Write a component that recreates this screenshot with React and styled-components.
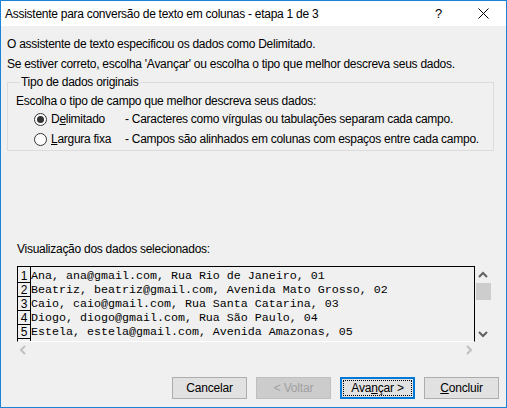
import React from "react";
import styled, { createGlobalStyle } from "styled-components";

const Global = createGlobalStyle`
  html, body { margin: 0; padding: 0; background: #f0f0f0; }
  * { box-sizing: border-box; }
`;

const UI = `"Liberation Sans", Arial, sans-serif`;

const Window = styled.div`
  width: 507px;
  height: 408px;
  border: 1px solid #1883d7;
  background: #f0f0f0;
  display: flex;
  flex-direction: column;
  font-family: ${UI};
  font-size: 12px;
  letter-spacing: -0.27px;
  color: #000;
  overflow: hidden;
  white-space: nowrap;
`;

const TitleBar = styled.div`
  height: 25px;
  background: #fff;
  display: flex;
  align-items: center;
  padding-left: 4px;
  flex-shrink: 0;
`;

const Title = styled.div`
  flex: 1;
  font-size: 12px;
  padding-top: 1px;
`;

const TitleButton = styled.div`
  width: 45px;
  height: 25px;
  display: flex;
  align-items: center;
  justify-content: center;
  font-size: 13px;
`;

const Body = styled.div`
  flex: 1;
  display: flex;
  flex-direction: column;
  padding: 8px 6px 0 6px;
`;

const Line = styled.div`
  height: 20px;
  line-height: 20px;
`;

const Group = styled.fieldset`
  margin: 1px 6px 0 0;
  padding: 6px 8px 1px 8px;
  border: 1px solid #dcdcdc;
  min-width: 0;
`;

const Legend = styled.legend`
  padding: 0 1px;
  margin-left: 4px;
  line-height: 14px;
`;

const GroupText = styled.div`
  height: 16px;
  line-height: 16px;
  margin-top: -2px;
`;

const RadioRow = styled.label`
  display: flex;
  align-items: center;
  height: 20px;
  padding-left: 18px;
`;

const RadioCircle = styled.span`
  width: 13px;
  height: 13px;
  border-radius: 50%;
  border: 1px solid #333;
  background: #fff;
  display: flex;
  align-items: center;
  justify-content: center;
  margin-right: 4px;
  flex-shrink: 0;
  &::after {
    content: "";
    width: 7px;
    height: 7px;
    border-radius: 50%;
    background: ${(p) => (p.$checked ? "#333" : "transparent")};
  }
`;

const RadioLabel = styled.span`
  width: 74px;
  flex-shrink: 0;
`;

const RadioDesc = styled.span``;

const U = styled.span`
  text-decoration: underline;
  text-underline-offset: 1px;
`;

const PreviewLabel = styled.div`
  margin: 90px 0 0 10px;
  height: 16px;
  line-height: 16px;
`;

const PreviewGrid = styled.div`
  margin: 9px 0 0 10px;
  display: grid;
  grid-template-columns: 458px 16px;
  grid-template-rows: 76px 16px;
  letter-spacing: 0;
`;

const PreviewBox = styled.div`
  border: 1px solid #000;
  border-bottom: 1px solid #fff;
  display: flex;
  overflow: hidden;
  padding-top: 2px;
`;

const NumCol = styled.div`
  width: 13px;
  border-right: 1px solid #000;
  display: flex;
  flex-direction: column;
  margin-top: -2px;
  padding-top: 2px;
`;

const NumCell = styled.div`
  height: 14px;
  border-bottom: 1px solid #000;
  font-size: 12px;
  line-height: 14px;
  text-align: center;
  flex-shrink: 0;
`;

const DataCol = styled.div`
  display: flex;
  flex-direction: column;
`;

const DataRow = styled.div`
  height: 14px;
  line-height: 14px;
  font-family: "Liberation Mono", "Courier New", monospace;
  font-size: 11.67px;
  white-space: pre;
`;

const VScroll = styled.div`
  display: flex;
  flex-direction: column;
  align-items: center;
  background: #f0f0f0;
`;

const ScrollArrow = styled.div`
  width: 16px;
  height: 17px;
  display: flex;
  align-items: center;
  justify-content: center;
`;

const Thumb = styled.div`
  width: 15px;
  height: 17px;
  background: #cdcdcd;
  margin-left: 1px;
`;

const Track = styled.div`
  flex: 1;
`;

const HScroll = styled.div`
  display: flex;
  justify-content: space-between;
  align-items: center;
  padding: 0 2px;
`;

const Footer = styled.div`
  margin-top: auto;
  display: flex;
  justify-content: flex-end;
  gap: 9px;
  padding: 0 1px 8px 0;
`;

const Button = styled.button`
  width: 75px;
  height: 22px;
  font-family: ${UI};
  font-size: 12px;
  letter-spacing: -0.2px;
  color: ${(p) => (p.disabled ? "#a0a0a0" : "#000")};
  background: ${(p) => (p.disabled ? "#cccccc" : "#e1e1e1")};
  border: ${(p) => (p.$default ? "2px solid #0078d7" : p.disabled ? "1px solid #bfbfbf" : "1px solid #adadad")};
  padding: 0;
  display: flex;
  align-items: center;
  justify-content: center;
  position: relative;
  &::after {
    content: "";
    display: ${(p) => (p.$default ? "block" : "none")};
    position: absolute;
    inset: 1px;
    border: 1px dotted #000;
  }
`;

const Chevron = ({ dir, color }) => {
  const paths = {
    up: "M1 6 L5 2 L9 6",
    down: "M1 2 L5 6 L9 2",
    left: "M6 1 L2 5 L6 9",
    right: "M2 1 L6 5 L2 9",
  };
  const vertical = dir === "up" || dir === "down";
  return (
    <svg width={vertical ? 10 : 8} height={vertical ? 8 : 10} viewBox={vertical ? "0 0 10 8" : "0 0 8 10"}>
      <path d={paths[dir]} fill="none" stroke={color} strokeWidth="2" />
    </svg>
  );
};

const rows = [
  "Ana, ana@gmail.com, Rua Rio de Janeiro, 01",
  "Beatriz, beatriz@gmail.com, Avenida Mato Grosso, 02",
  "Caio, caio@gmail.com, Rua Santa Catarina, 03",
  "Diogo, diogo@gmail.com, Rua São Paulo, 04",
  "Estela, estela@gmail.com, Avenida Amazonas, 05",
  "",
];

export default function App() {
  return (
    <>
      <Global />
      <Window>
        <TitleBar>
          <Title>Assistente para conversão de texto em colunas - etapa 1 de 3</Title>
          <TitleButton>?</TitleButton>
          <TitleButton>
            <svg width="11" height="11" viewBox="0 0 11 11">
              <path d="M0.5 0.5 L10.5 10.5 M10.5 0.5 L0.5 10.5" stroke="#000" strokeWidth="1" />
            </svg>
          </TitleButton>
        </TitleBar>
        <Body>
          <Line>O assistente de texto especificou os dados como Delimitado.</Line>
          <Line>Se estiver correto, escolha 'Avançar' ou escolha o tipo que melhor descreva seus dados.</Line>
          <Group>
            <Legend>Tipo de dados originais</Legend>
            <GroupText>Escolha o tipo de campo que melhor descreva seus dados:</GroupText>
            <RadioRow>
              <RadioCircle $checked />
              <RadioLabel>
                D<U>e</U>limitado
              </RadioLabel>
              <RadioDesc>- Caracteres como vírgulas ou tabulações separam cada campo.</RadioDesc>
            </RadioRow>
            <RadioRow>
              <RadioCircle />
              <RadioLabel>
                <U>L</U>argura fixa
              </RadioLabel>
              <RadioDesc>- Campos são alinhados em colunas com espaços entre cada campo.</RadioDesc>
            </RadioRow>
          </Group>
          <PreviewLabel>Visualização dos dados selecionados:</PreviewLabel>
          <PreviewGrid>
            <PreviewBox>
              <NumCol>
                {rows.map((_, i) => (
                  <NumCell key={i}>{i < 5 ? i + 1 : ""}</NumCell>
                ))}
              </NumCol>
              <DataCol>
                {rows.map((r, i) => (
                  <DataRow key={i}>{r}</DataRow>
                ))}
              </DataCol>
            </PreviewBox>
            <VScroll>
              <ScrollArrow>
                <Chevron dir="up" color="#606060" />
              </ScrollArrow>
              <Thumb />
              <Track />
              <ScrollArrow>
                <Chevron dir="down" color="#606060" />
              </ScrollArrow>
            </VScroll>
            <HScroll>
              <Chevron dir="left" color="#c0c0c0" />
              <Chevron dir="right" color="#c0c0c0" />
            </HScroll>
            <div />
          </PreviewGrid>
          <Footer>
            <Button>Cancelar</Button>
            <Button disabled>&lt; Voltar</Button>
            <Button $default>
              Ava<U>n</U>çar &gt;
            </Button>
            <Button>
              <U>C</U>oncluir
            </Button>
          </Footer>
        </Body>
      </Window>
    </>
  );
}
